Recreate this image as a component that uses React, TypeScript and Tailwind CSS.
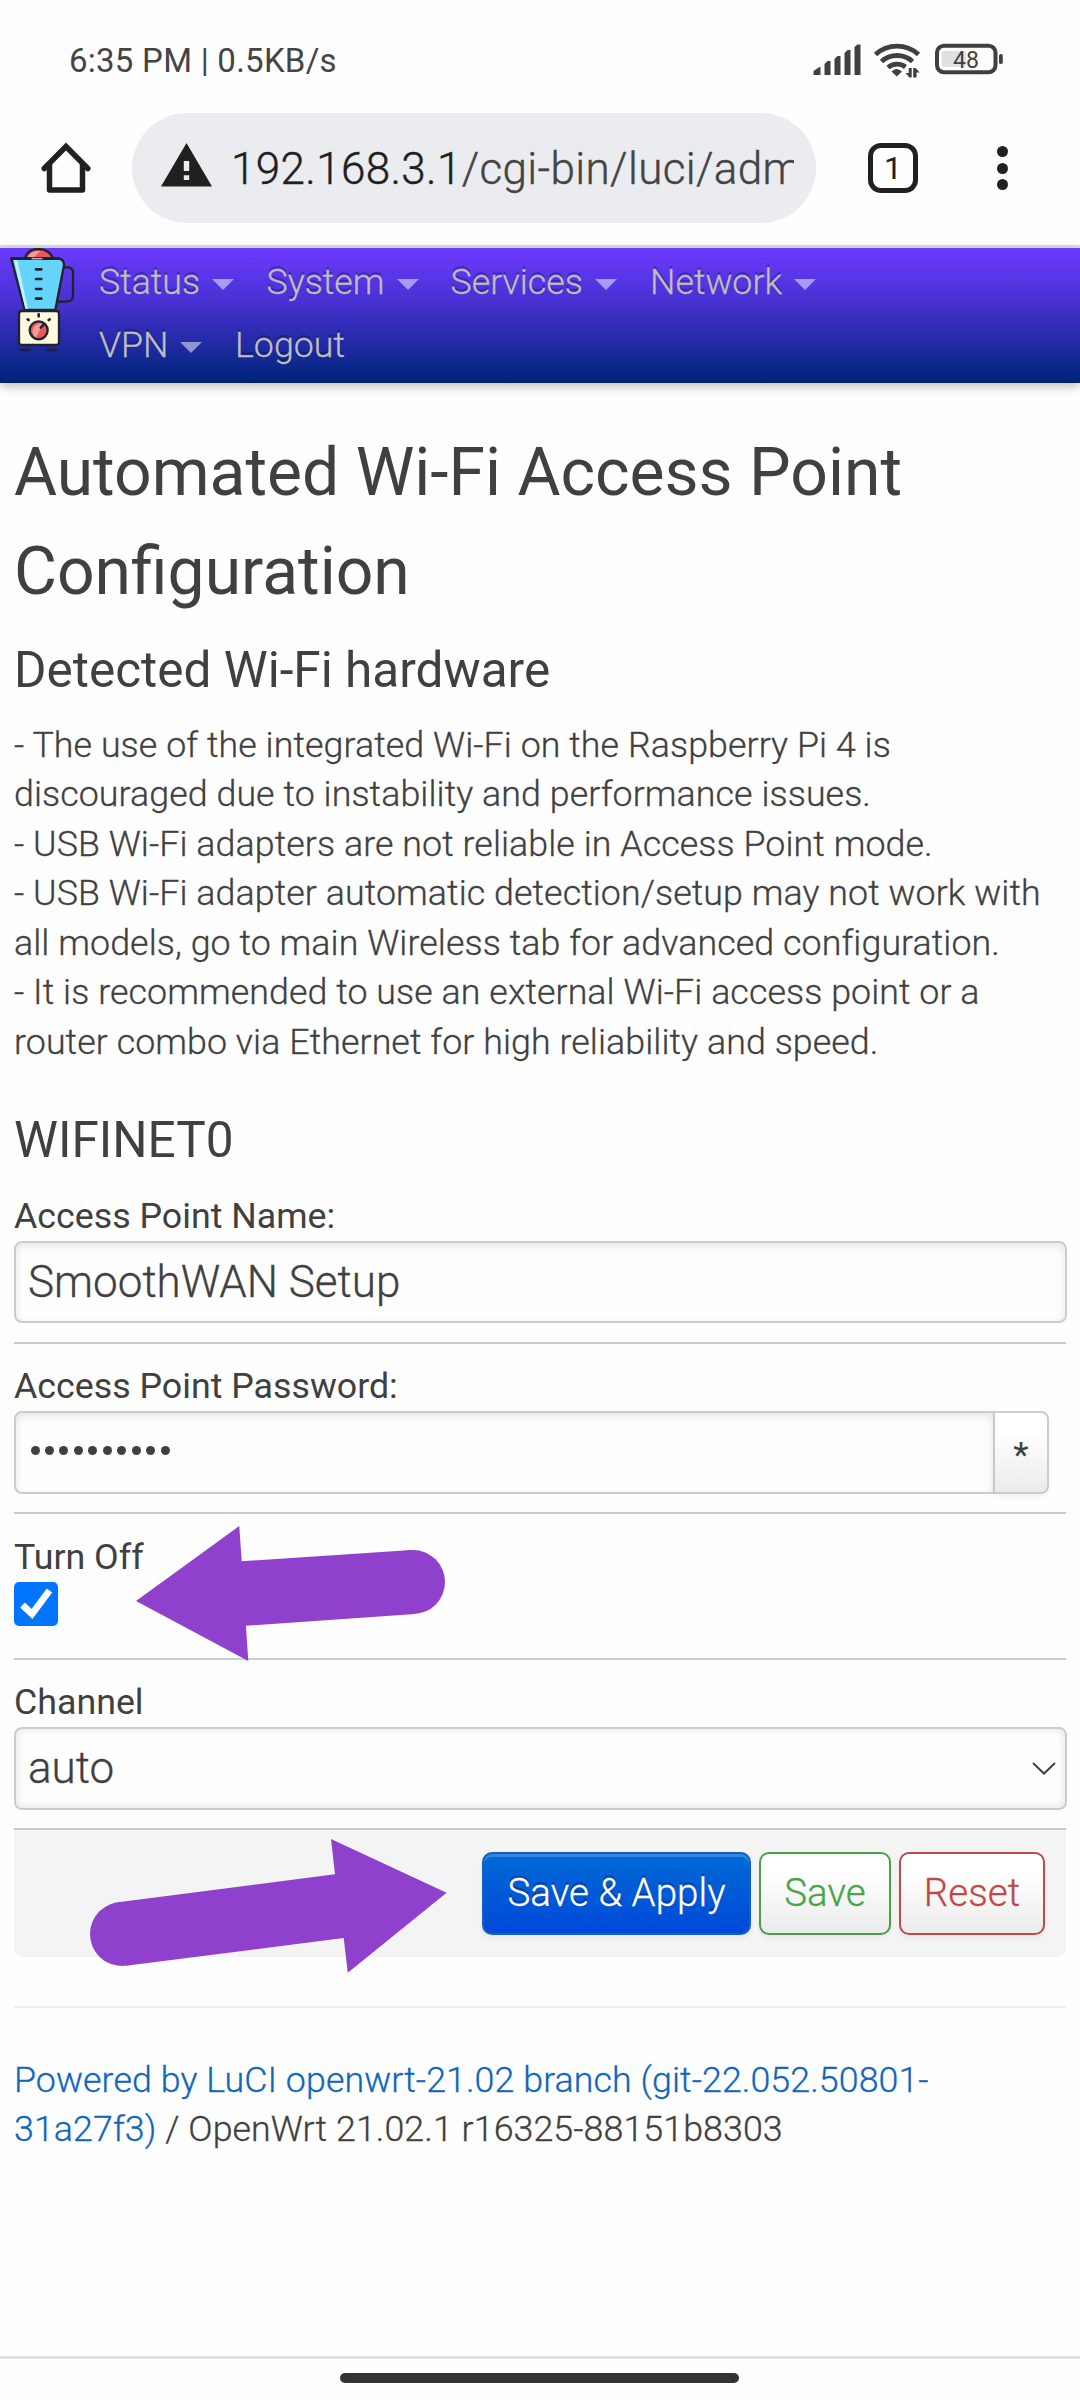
import React from "react";

const navRows = [
  [
    { label: "Status", menu: true, width: "w-[167.5px]" },
    { label: "System", menu: true, width: "w-[184px]" },
    { label: "Services", menu: true, width: "w-[199.5px]" },
    { label: "Network", menu: true, width: "w-[170px]" },
  ],
  [
    { label: "VPN", menu: true, width: "w-[136px]" },
    { label: "Logout", menu: false, width: "w-[120px]" },
  ],
];

function StatusBar() {
  return (
    <div className="flex h-[113px] items-start justify-between pl-[69px] pr-[76px] pt-[41px] text-[#444]">
      <div className="text-[33px] leading-[40px] font-normal tracking-[0.25px] whitespace-nowrap">6:35 PM | 0.5KB/s</div>
      <div className="flex h-[40px] items-start">
        <svg className="mt-[2px]" width="191" height="40" viewBox="813 43 191 40" fill="#404040">
          <path d="M813.5 75v-4l6-4h1v8zM824.500 75V64l3-3h3v14zM834.500 75V59l3-3h3v19zM844.500 75V53l3-3h3v25zM854.500 75V47l3-2.500h3V75z" />
          <g fill="none" stroke="#404040" strokeWidth="4.800">
            <path d="M875.500 54.500a32 32 0 0 1 43 0" />
            <path d="M881.500 61.500a23 23 0 0 1 31 0" />
            <path d="M888 67.500a14 14 0 0 1 17.500-.500" />
          </g>
          <path d="M891.500 71.500q5-5 10.500 0l-5.300 5zM905.500 73h3.200v-5h3v9.500h-2.300zM913.200 68h2.400l4 4.500h-3v5h-3.400z" />
          <rect x="937" y="45.700" width="58.500" height="26.600" rx="7" fill="none" stroke="#404040" strokeWidth="4" />
          <rect x="941.700" y="51" width="24.500" height="16" rx="3" fill="#e0e0e0" />
          <rect x="999" y="54" width="3.800" height="10" rx="1.700" />
          <text x="966" y="67.700" textAnchor="middle" fontSize="23" fontFamily="Roboto, sans-serif">48</text>
        </svg>
      </div>
    </div>
  );
}

function Toolbar() {
  return (
    <div className="flex h-[135px] items-start border-b-[3px] border-[#e0e0e0]">
      <svg className="ml-[38px] mt-[27px] shrink-0" width="56" height="56" viewBox="38 140 56 56" fill="none" stroke="#202020" strokeWidth="5.500" strokeLinejoin="round" strokeLinecap="round">
        <path d="M44.200 168.500L66 146.500l21.800 22" strokeLinejoin="miter" />
        <path d="M49.500 164.500V190h33v-25.500" />
      </svg>
      <div className="ml-[38px] flex h-[110px] w-[684px] shrink-0 items-center rounded-full bg-[#ebecf0] pl-[29px]">
        <svg className="-mt-[6px] shrink-0" width="51" height="44" viewBox="0 0 51 44">
          <path d="M25.500 0L51 43.500H0z" fill="#202020" />
          <path d="M22.800 18h5.400v10h-5.400zM22.800 32.200h5.400v4.900h-5.400z" fill="#ebecf0" />
        </svg>
        <div className="ml-[19px] mt-[1px] w-[563px] overflow-hidden whitespace-nowrap text-[44px] leading-[60px] font-light tracking-[0.35px] text-[#444] [-webkit-text-stroke:0.4px]">
          <span className="text-[#202020]">192.168.3.1</span>/cgi-bin/luci/adm
        </div>
      </div>
      <div className="ml-[52px] mt-[30px] flex h-[50px] w-[50px] shrink-0 items-center justify-center rounded-[13px] border-[5.5px] border-[#202020] text-[32px] leading-none text-[#202020]">
        1
      </div>
      <div className="ml-[79px] mt-[33px] flex flex-col gap-[5.5px]">
        <span className="h-[11px] w-[11px] rounded-full bg-[#202020]" />
        <span className="h-[11px] w-[11px] rounded-full bg-[#202020]" />
        <span className="h-[11px] w-[11px] rounded-full bg-[#202020]" />
      </div>
    </div>
  );
}

function BlenderLogo() {
  return (
    <svg className="shrink-0" width="100" height="120" viewBox="0 39 300 360" stroke="#20222e" strokeWidth="7" strokeLinejoin="round" strokeLinecap="round">
      <path d="M75 70q8-28 40-28t44 28z" fill="#e85a5a" />
      <path d="M84 66q6-16 28-18l10 1q-14 8-18 18z" fill="#f59a9a" stroke="none" />
      <path d="M190 97h14q15 0 15 16v68q0 17-15 18l-32 2" fill="none" />
      <path d="M34 71h140q18 0 18 20l-26 134H74z" fill="#66d3fa" />
      <path d="M42 76h10l32 145h-8z" fill="#c4f0fd" stroke="none" />
      <path d="M34 71h60M128 71h48" strokeWidth="8" />
      <path d="M96 71h30" stroke="#f8c8c8" strokeWidth="3" />
      <path d="M108 103h16M108 132h16M108 162h16M108 191h16" strokeWidth="8" />
      <rect x="57" y="228" width="120" height="102" rx="8" fill="#fffbe0" />
      <path d="M63 345h26M143 345h26M116 238v6M83 253l3 2M149 253l-3 2" strokeWidth="8" />
      <circle cx="116" cy="286" r="27" fill="#e85a5a" />
      <path d="M108 308a23 23 0 0 1 20-41z" fill="#f59a9a" stroke="none" />
      <path d="M122 278l9-9" />
    </svg>
  );
}

function Header() {
  return (
    <header className="flex h-[134.5px] bg-[linear-gradient(to_bottom,#6d3aff_0%,#4a31d4_38%,#00257c_98%,#001f6a_100%)] shadow-[0_3px_10px_rgba(0,0,0,0.28)]">
      <BlenderLogo />
      <nav className="-ml-[1px] pt-[3.500px]">
        {navRows.map((row, i) => (
          <div key={i} className="flex h-[63px] items-center">
            {row.map((item) => (
              <div key={item.label} className={item.width + " flex items-center whitespace-nowrap text-[35.75px] font-light text-[#bfbfbf] [-webkit-text-stroke:0.3px] [text-shadow:0_-2.75px_0_rgba(0,0,0,0.25)]"}>
                {item.label}
                {item.menu && (
                  <svg className="ml-[12px] mt-[2px]" width="22" height="11" viewBox="0 0 22 11">
                    <path d="M0 0h22L11 11z" fill="#fff" fillOpacity="0.5" />
                  </svg>
                )}
              </div>
            ))}
          </div>
        ))}
      </nav>
    </header>
  );
}

function Annotations() {
  return (
    <svg className="pointer-events-none absolute left-0 top-[1500px]" width="480" height="500" viewBox="0 1500 480 500" fill="#8f41cd">
      <path d="M136 1601L239.300 1526l2.400 35.300L411.500 1550L415 1614L245.900 1625.700l2.400 35.300z" />
      <circle cx="413" cy="1582" r="32" />
      <path d="M446.600 1892.700L331 1839l4 35.300L118 1902.300L126 1965.700L343.700 1938l4.100 34.700z" />
      <circle cx="122" cy="1934" r="32" />
    </svg>
  );
}

export default function App() {
  return (
    <div className="relative flex h-[2400px] w-[1080px] flex-col overflow-hidden bg-[#fefefe] font-['Roboto',sans-serif] text-[#404040]">
      <StatusBar />
      <Toolbar />
      <Header />
      <main className="flex flex-col px-[14px] pt-[40.5px]">
        <h1 className="text-[66px] leading-[99px] font-normal">
          Automated Wi-Fi Access Point<br />Configuration
        </h1>
        <h3 className="mt-[16px] text-[49.5px] leading-[66px] font-normal">Detected Wi-Fi hardware</h3>
        <p className="mt-[17.5px] whitespace-nowrap text-[35.75px] leading-[49.5px] font-light tracking-[0.075px] [-webkit-text-stroke:0.3px]">
          - The use of the integrated Wi-Fi on the Raspberry Pi 4 is<br />
          discouraged due to instability and performance issues.<br />
          - USB Wi-Fi adapters are not reliable in Access Point mode.<br />
          - USB Wi-Fi adapter automatic detection/setup may not work with<br />
          all models, go to main Wireless tab for advanced configuration.<br />
          - It is recommended to use an external Wi-Fi access point or a<br />
          router combo via Ethernet for high reliability and speed.
        </p>
        <h3 className="mt-[40px] text-[49.5px] leading-[66px] font-normal">WIFINET0</h3>

        <div className="mt-[18px] h-[153px] border-b-2 border-[#ccc]">
          <div className="text-[35.75px] leading-[50px]">Access Point Name:</div>
          <div className="flex h-[82px] w-[1053px] items-center rounded-[8px] border-2 border-[#ccc] pl-[12px] text-[44px] font-light [-webkit-text-stroke:0.3px] shadow-[inset_0_3px_8px_rgba(0,0,0,0.1)]">
            SmoothWAN Setup
          </div>
        </div>

        <div className="h-[170px] border-b-2 border-[#ccc] pt-[17px]">
          <div className="text-[35.75px] leading-[50px]">Access Point Password:</div>
          <div className="flex h-[83px] w-[1035px]">
            <div className="flex flex-1 items-center gap-[5.46px] rounded-l-[8px] border-2 border-[#ccc] pb-[4px] pl-[14.5px] shadow-[inset_0_3px_8px_rgba(0,0,0,0.1)]">
              {Array.from({ length: 10 }, (_, i) => (
                <span key={i} className="h-[9px] w-[9px] rounded-full bg-[#404040]" />
              ))}
            </div>
            <div className="flex w-[54px] items-center justify-center rounded-r-[8px] border-2 border-l-0 border-[#ccc] bg-linear-to-b from-white from-25% to-[#ebebeb] pt-[7px] text-[35.75px] shadow-[0_3px_5px_rgba(0,0,0,0.05)]">
              *
            </div>
          </div>
        </div>

        <div className="h-[146px] border-b-2 border-[#ccc] pt-[18px]">
          <div className="text-[35.75px] leading-[50px]">Turn Off</div>
          <svg width="44" height="44" viewBox="0 0 44 44">
            <rect width="44" height="44" rx="5" fill="#0075ff" />
            <path d="M8.500 23L18 32L35.500 8.500" fill="none" stroke="#fff" strokeWidth="6.800" />
          </svg>
        </div>

        <div className="h-[170px] border-b-2 border-[#ccc] pt-[17px]">
          <div className="text-[35.75px] leading-[50px]">Channel</div>
          <div className="flex h-[83px] w-[1053px] items-center justify-between rounded-[8px] border-2 border-[#ccc] pb-[2px] pl-[12px] pr-[9px] text-[44px] font-light [-webkit-text-stroke:0.3px] shadow-[inset_0_0_8px_rgba(0,0,0,0.12)]">
            auto
            <svg className="mt-[2px]" width="24" height="14" viewBox="0 0 24 14" fill="none" stroke="#404040" strokeWidth="2">
              <path d="M1 1l11 10.500L23 1" />
            </svg>
          </div>
        </div>

        <div className="flex h-[127px] items-start justify-end gap-[8px] rounded-b-[8px] bg-[#f4f4f4] pr-[21px] pt-[22px] text-[38.5px] font-light tracking-[0.05px] [-webkit-text-stroke:0.3px]">
          <div className="flex h-[83px] w-[269px] items-center justify-center rounded-[10px] border-2 border-[#1560bd] bg-linear-to-b from-[#0069d6] to-[#0048d8] pb-[2px] text-white shadow-[inset_0_3px_0_rgba(255,255,255,0.2),0_3px_5px_rgba(0,0,0,0.05)] [text-shadow:0_-2.75px_0_rgba(0,0,0,0.25)]">
            Save &amp; Apply
          </div>
          <div className="flex h-[83px] w-[132px] items-center justify-center rounded-[10px] border-2 border-[#4a9f4a] bg-linear-to-b from-white from-25% to-[#ebebeb] pb-[2px] text-[#46a546] shadow-[0_3px_5px_rgba(0,0,0,0.05)]">
            Save
          </div>
          <div className="flex h-[83px] w-[146px] items-center justify-center rounded-[10px] border-2 border-[#bb4a48] bg-linear-to-b from-white from-25% to-[#ebebeb] pb-[2px] text-[#bd4a47] shadow-[0_3px_5px_rgba(0,0,0,0.05)]">
            Reset
          </div>
        </div>

        <footer className="mt-[49px] border-t-2 border-[#eee] pt-[47.5px] text-[35.75px] leading-[49.5px] font-light tracking-[0.08px] [-webkit-text-stroke:0.3px]">
          <span className="text-[#1166bb]">Powered by LuCI openwrt-21.02 branch (git-22.052.50801-<br />31a27f3)</span> / OpenWrt 21.02.1 r16325-88151b8303
        </footer>
      </main>
      <div className="mt-auto flex h-[44px] shrink-0 justify-center border-t-[3px] border-[#e1e1e1] pr-[1px] pt-[14px]">
        <div className="h-[10px] w-[399px] rounded-full bg-[#333]" />
      </div>
      <Annotations />
    </div>
  );
}
